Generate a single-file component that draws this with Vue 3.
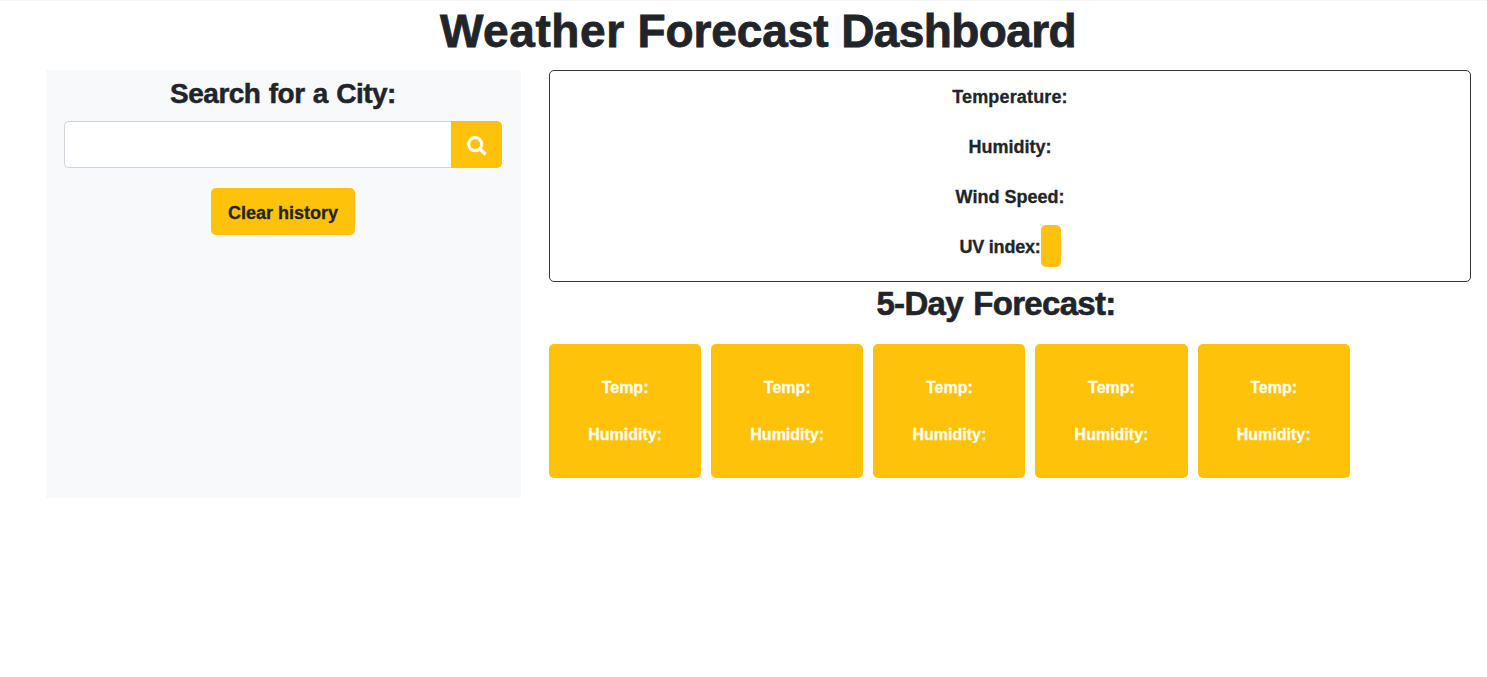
<script setup>
const readings = ['Temperature:', 'Humidity:', 'Wind Speed:']
const days = [1, 2, 3, 4, 5]
</script>

<template>
  <div class="page">
    <h1><span class="wide">Weather</span> <span class="mid">Forecast</span> <span class="tight">Dashboard</span></h1>
    <main>
      <aside>
        <h3>Search for a City:</h3>
        <form class="search" @submit.prevent>
          <input type="text" aria-label="City" />
          <button type="submit" class="go" aria-label="Search">
            <svg width="20" height="20" viewBox="0 0 20 20" fill="none" stroke="currentColor">
              <circle cx="8.2" cy="8.2" r="6.5" stroke-width="3.2" />
              <path d="M13 13L17.5 17.5" stroke-width="3.5" stroke-linecap="round" />
            </svg>
          </button>
        </form>
        <button class="clear" type="button">Clear history</button>
      </aside>
      <section>
        <div class="current">
          <p v-for="r in readings" :key="r">{{ r }}</p>
          <p class="uv">UV index:<i class="badge"></i></p>
        </div>
        <h2>5-Day Forecast:</h2>
        <div class="cards">
          <div v-for="d in days" :key="d" class="card">
            <p>Temp:</p>
            <p>Humidity:</p>
          </div>
        </div>
      </section>
    </main>
  </div>
</template>

<style>
body { background: #fff; }
</style>

<style scoped>
* { box-sizing: border-box; }
.page {
  height: 677px;
  overflow: hidden;
  border-top: 1px solid #faf6f7;
  font-family: "Liberation Sans", Arial, sans-serif;
  font-weight: 700;
  color: #212529;
  text-align: center;
  -webkit-text-stroke: 0.3px currentColor;
}
h1, h2, h3, p { margin: 0; font-weight: 700; }
h1 {
  height: 69px;
  padding: 4px 0 0 29px;
  font-size: 46px;
  line-height: 53px;
  -webkit-text-stroke: 0.8px currentColor;
}
.wide { letter-spacing: 0.6px; }
.mid { letter-spacing: -0.1px; }
.tight { letter-spacing: -0.6px; }
main {
  display: flex;
  align-items: flex-start;
  gap: 28px;
  padding: 0 16px 0 46px;
}
aside {
  width: 475px;
  height: 428px;
  padding: 0 19px 0 18px;
  background: #f8f9fb;
}
h3 {
  height: 51px;
  padding-top: 8px;
  font-size: 28px;
  line-height: 32px;
  letter-spacing: -0.5px;
  word-spacing: 1px;
  -webkit-text-stroke: 0.5px currentColor;
}
.search { display: flex; height: 47px; margin-bottom: 20px; }
input {
  flex: 1;
  min-width: 0;
  border: 1px solid #ced4da;
  border-right: 0;
  border-radius: 5px 0 0 5px;
  background: #fff;
}
.go {
  display: flex;
  align-items: center;
  justify-content: center;
  width: 51px;
  padding: 3px 0 0;
  border: 0;
  border-radius: 0 5px 5px 0;
  background: #ffc20a;
  color: #fffdf5;
}
.clear {
  width: 144px;
  height: 47px;
  padding: 3px 0 0;
  border: 0;
  border-radius: 5px;
  background: #ffc20a;
  color: #212529;
  font: 700 18px/24px "Liberation Sans", Arial, sans-serif;
  -webkit-text-stroke: 0.3px currentColor;
}
section { flex: 1; }
.current {
  height: 212px;
  padding-top: 1px;
  border: 1px solid #343539;
  border-radius: 5px;
}
.current p {
  display: flex;
  align-items: center;
  justify-content: center;
  height: 50px;
  font-size: 18px;
}
.current p:first-child { letter-spacing: 0.15px; }
.current .uv { letter-spacing: -0.2px; }
.badge {
  width: 20px;
  height: 42px;
  margin-bottom: 2px;
  border-radius: 5px;
  background: #ffc20a;
}
h2 {
  height: 62px;
  padding: 3px 28px 0 0;
  font-size: 33px;
  line-height: 38px;
  letter-spacing: -0.7px;
  word-spacing: 2px;
  -webkit-text-stroke: 0.6px currentColor;
}
.cards {
  display: grid;
  grid-template-columns: repeat(5, 152.15px);
  gap: 10px;
}
.card {
  height: 134px;
  padding-top: 32px;
  border-radius: 5px;
  background: #ffc20a;
  color: #fffdf0;
  font-size: 16px;
  line-height: 24px;
}
.card p { margin-bottom: 23px; }
</style>
